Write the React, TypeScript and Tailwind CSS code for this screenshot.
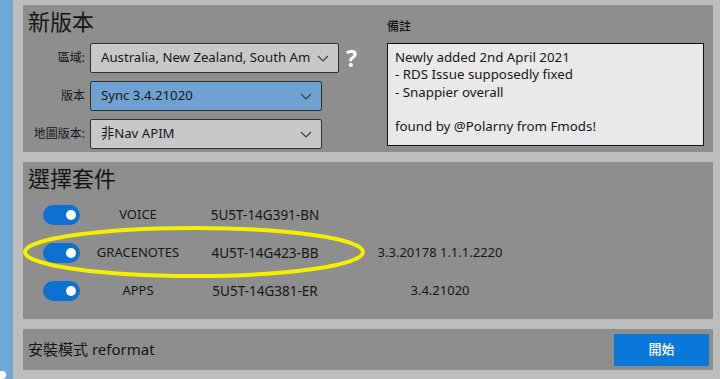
import React from "react";

const font = "font-['Noto_Sans','Noto_Sans_CJK_TC',sans-serif]";

function Chevron() {
  return (
    <svg width="12" height="7" viewBox="0 0 12 7" fill="none" className="shrink-0">
      <path d="M1 1 L6 6 L11 1" stroke="#3a3a3a" strokeWidth="1.1" />
    </svg>
  );
}

function Select({ text, w, blue }: { text: string; w: string; blue?: boolean }) {
  return (
    <div
      className={`${w} h-[30px] flex items-center justify-between pl-[10px] pr-[9px] border border-[#2e2e2e] rounded-[2px] ${
        blue ? "bg-[#6fa2d2]" : "bg-[#c8c8c8]"
      } text-[13.2px] text-[#161616]`}
    >
      <span className="whitespace-nowrap overflow-hidden min-w-0">{text}</span>
      <Chevron />
    </div>
  );
}

function Toggle() {
  return (
    <div className="w-[37px] h-[20px] rounded-full bg-[#0b72d4] flex items-center justify-end pr-[4px]">
      <div className="w-[10px] h-[10px] rounded-full bg-white" />
    </div>
  );
}

function Row({ name, code, ver }: { name: string; code: string; ver: string }) {
  return (
    <div className="flex items-center h-[38px] text-[13px] text-[#161616]">
      <div className="ml-[20px] w-[37px]">
        <Toggle />
      </div>
      <div className="w-[116px] text-center">{name}</div>
      <div className="w-[138px] text-center text-[13.5px]">{code}</div>
      <div className="w-[212px] text-center">{ver}</div>
    </div>
  );
}

export default function App() {
  return (
    <div className={`w-[720px] h-[379px] flex overflow-hidden ${font}`}>
      <div className="w-[13px] bg-[#6ea8d6] flex flex-col justify-end">
        <div className="w-[6px] h-[8px] bg-white rounded-r-full" />
      </div>
      <div className="flex-1 bg-[#bdbdbd] pl-[10px] pr-[7px] pt-[5px] flex flex-col gap-[10px]">
        {/* Panel 1 */}
        <div className="h-[147px] bg-[#8e8e8e] flex">
          <div className="w-[364px] flex flex-col">
            <div className="pl-[5px] h-[38px] pt-[1px] text-[22px] leading-[30px] text-[#141414]">新版本</div>
            <div className="flex flex-col gap-[8px]">
              <div className="flex items-center">
                <div className="w-[62px] text-right text-[12px] text-[#161616]">區域:</div>
                <div className="ml-[5px]">
                  <Select text="Australia, New Zealand, South Am" w="w-[249px]" />
                </div>
                <div className="ml-[7px] text-[23px] font-bold text-white leading-none">?</div>
              </div>
              <div className="flex items-center">
                <div className="w-[62px] text-right text-[12px] text-[#161616]">版本</div>
                <div className="ml-[5px]">
                  <Select text="Sync 3.4.21020" w="w-[232px]" blue />
                </div>
              </div>
              <div className="flex items-center">
                <div className="w-[62px] text-right text-[12px] text-[#161616]">地圖版本:</div>
                <div className="ml-[5px]">
                  <Select text="非Nav APIM" w="w-[232px]" />
                </div>
              </div>
            </div>
          </div>
          <div className="flex flex-col">
            <div className="h-[38px] pt-[14px] text-[12px] leading-[16px] font-medium text-[#161616]">備註</div>
            <div className="w-[317px] h-[103px] bg-[#e9e9e9] border border-[#111] px-[7px] pt-[5px] text-[13.3px] leading-[17.3px] text-[#161616]">
              <div>Newly added 2nd April 2021</div>
              <div>- RDS Issue supposedly fixed</div>
              <div>- Snappier overall</div>
              <div>&nbsp;</div>
              <div>found by @Polarny from Fmods!</div>
            </div>
          </div>
        </div>
        {/* Panel 2 */}
        <div className="h-[157px] bg-[#8e8e8e] relative flex flex-col">
          <div className="pl-[5px] h-[34px] pt-[1px] text-[22px] leading-[30px] text-[#141414]">選擇套件</div>
          <Row name="VOICE" code="5U5T-14G391-BN" ver="" />
          <Row name="GRACENOTES" code="4U5T-14G423-BB" ver="3.3.20178 1.1.1.2220" />
          <Row name="APPS" code="5U5T-14G381-ER" ver="3.4.21020" />
          <svg className="absolute left-[-2px] top-[63px]" width="346" height="54" viewBox="0 0 346 54">
            <ellipse cx="173" cy="27" rx="169" ry="24" fill="none" stroke="#f4f000" strokeWidth="4" />
          </svg>
        </div>
        {/* Panel 3 */}
        <div className="h-[41px] bg-[#8e8e8e] flex items-center justify-between pl-[5px] pr-[4px]">
          <div className="text-[15px] text-[#141414]">安裝模式 reformat</div>
          <div className="w-[95px] h-[32px] bg-[#0a78d8] flex items-center justify-center text-white text-[13px] font-medium">開始</div>
        </div>
      </div>
    </div>
  );
}
